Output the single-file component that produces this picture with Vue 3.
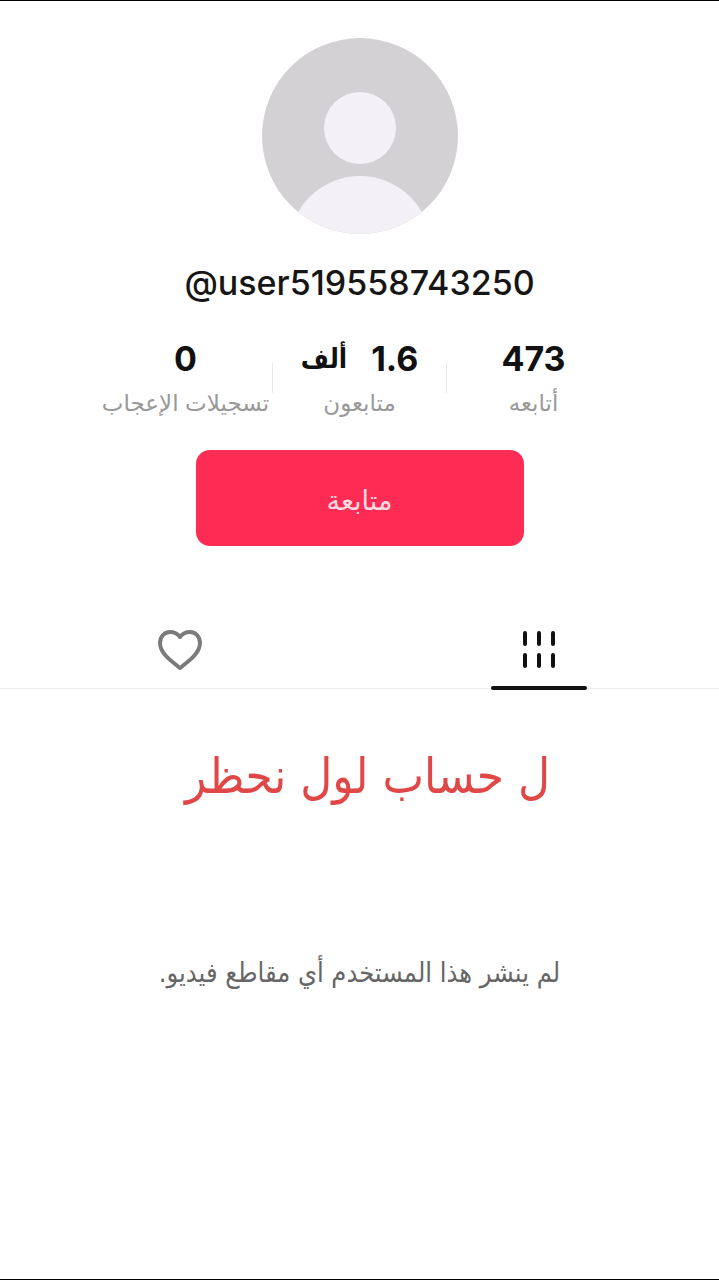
<script setup>
import { ref } from 'vue'

const activeTab = ref('videos')
const stats = [
  { value: '473', label: 'أتابعه', name: 'following' },
  { value: '1.6', unit: 'ألف', label: 'متابعون', name: 'followers' },
  { value: '0', label: 'تسجيلات الإعجاب', name: 'likes' }
]
</script>

<template>
  <main class="profile" dir="rtl" lang="ar">
    <svg class="avatar" viewBox="0 0 198 198" aria-hidden="true">
      <defs>
        <clipPath id="face"><circle cx="99" cy="99" r="98" /></clipPath>
      </defs>
      <circle cx="99" cy="99" r="98" fill="#d4d1d5" />
      <g clip-path="url(#face)" fill="#f4f1f6">
        <circle cx="99" cy="91" r="36" />
        <circle cx="99" cy="210" r="71" />
      </g>
    </svg>

    <h1 class="username" dir="ltr">@user519558743250</h1>

    <div class="stats">
      <div v-for="s in stats" :key="s.name" class="stat">
        <strong><span>{{ s.value }}</span><span v-if="s.unit" class="unit">{{ s.unit }}</span></strong>
        <span class="label">{{ s.label }}</span>
      </div>
    </div>

    <button class="follow" type="button">متابعة</button>

    <nav class="tabs">
      <button type="button" class="tab" :class="{ active: activeTab === 'videos' }" aria-label="الفيديوهات" @click="activeTab = 'videos'">
        <svg width="40" height="40" viewBox="0 0 40 40" fill="none" stroke="#111" stroke-width="4" stroke-linecap="round">
          <path d="M6 4v11M20 4v11M34 4v11M6 26v11M20 26v11M34 26v11" />
        </svg>
      </button>
      <button type="button" class="tab" :class="{ active: activeTab === 'likes' }" aria-label="الإعجابات" @click="activeTab = 'likes'">
        <svg width="46" height="42" viewBox="0 0 46 42" fill="none" stroke="#7b7b7b" stroke-width="4" stroke-linejoin="round">
          <path d="M23 9C20 5 17 4 13 4C7 4 3 9 3 15C3 25 13 32 23 40C33 32 43 25 43 15C43 9 39 4 33 4C29 4 26 5 23 9Z" />
        </svg>
      </button>
    </nav>

    <p class="note">ل حساب لول نحظر</p>
    <p class="empty">لم ينشر هذا المستخدم أي مقاطع فيديو.</p>
  </main>
</template>

<style>
body {
  background: #fff;
}
</style>

<style scoped>
.profile {
  box-sizing: border-box;
  min-height: 100vh;
  padding-top: 36px;
  border-top: 1px solid #000;
  border-bottom: 1px solid #000;
  display: flex;
  flex-direction: column;
  align-items: center;
  font-family: Inter, "DejaVu Sans", sans-serif;
}

.avatar {
  width: 198px;
  height: 198px;
}

.username {
  margin: 28px 0 0;
  font-size: 34px;
  line-height: 40px;
  font-weight: 550;
  color: #161616;
}

.stats {
  display: flex;
  margin-top: 36px;
}

.stat {
  position: relative;
  width: 174px;
  display: flex;
  flex-direction: column;
  align-items: center;
  white-space: nowrap;
}

.stat + .stat::before {
  content: "";
  position: absolute;
  top: 24px;
  right: 0;
  width: 1px;
  height: 30px;
  background: #e8e8e8;
}

.stat strong {
  display: flex;
  gap: 24px;
  font-size: 34px;
  line-height: 40px;
  color: #111;
}

.unit {
  font-family: "DejaVu Sans Condensed", "DejaVu Sans", sans-serif;
  font-size: 27px;
}

.label {
  margin-top: 4px;
  font-size: 23px;
  line-height: 40px;
  color: #999;
}

.follow {
  width: 328px;
  height: 96px;
  margin-top: 27px;
  padding: 4px 0 0;
  border: 0;
  border-radius: 14px;
  background: #fe2c55;
  color: #fbdce2;
  font: 27px "DejaVu Sans", sans-serif;
}

.tabs {
  align-self: stretch;
  display: flex;
  margin-top: 64px;
  border-bottom: 1px solid #eee;
}

.tab {
  position: relative;
  flex: 1;
  height: 78px;
  padding: 0;
  border: 0;
  background: none;
  display: flex;
  align-items: center;
  justify-content: center;
}

.tab.active::after {
  content: "";
  position: absolute;
  bottom: -2px;
  left: calc(50% - 48px);
  width: 96px;
  height: 4px;
  border-radius: 2px;
  background: #111;
}

.note {
  margin: 48px 0 0;
  padding-left: 16px;
  font-family: "DejaVu Sans Condensed", "DejaVu Sans", sans-serif;
  font-size: 49px;
  line-height: 80px;
  color: #e04848;
}

.empty {
  margin: 136px 0 0;
  font-family: "DejaVu Sans Condensed", "DejaVu Sans", sans-serif;
  font-size: 27px;
  line-height: 40px;
  color: #666;
}
</style>
